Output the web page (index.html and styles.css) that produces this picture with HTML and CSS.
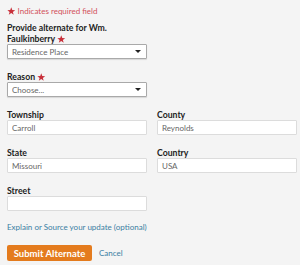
FILE: index.html
```html
<!DOCTYPE html>
<html lang="en">
<head>
  <meta charset="UTF-8" />
  <title>Submit Alternate</title>
  <link rel="stylesheet" href="styles.css">
</head>
<body>
  <form class="alt-form">
    <p class="required-note"><svg class="star" viewBox="0 0 10 10"><path d="M5 0.4 6.2 3.6 9.6 3.7 6.9 5.8 7.9 9.2 5 7.2 2.1 9.2 3.1 5.8 0.4 3.7 3.8 3.6Z"/></svg> Indicates required field</p>

    <div class="field">
      <label for="residence">Provide alternate for Wm. Faulkinberry <svg class="star" viewBox="0 0 10 10"><path d="M5 0.4 6.2 3.6 9.6 3.7 6.9 5.8 7.9 9.2 5 7.2 2.1 9.2 3.1 5.8 0.4 3.7 3.8 3.6Z"/></svg></label>
      <div class="select-wrap">
        <select id="residence">
          <option>Residence Place</option>
        </select>
        <span class="caret"></span>
      </div>
    </div>

    <div class="field">
      <label for="reason">Reason <svg class="star" viewBox="0 0 10 10"><path d="M5 0.4 6.2 3.6 9.6 3.7 6.9 5.8 7.9 9.2 5 7.2 2.1 9.2 3.1 5.8 0.4 3.7 3.8 3.6Z"/></svg></label>
      <div class="select-wrap">
        <select id="reason">
          <option>Choose...</option>
        </select>
        <span class="caret"></span>
      </div>
    </div>

    <div class="row">
      <div class="field">
        <label for="township">Township</label>
        <input type="text" id="township" value="Carroll" />
      </div>
      <div class="field">
        <label for="county">County</label>
        <input type="text" id="county" value="Reynolds" />
      </div>
    </div>

    <div class="row">
      <div class="field">
        <label for="state">State</label>
        <input type="text" id="state" value="Missouri" />
      </div>
      <div class="field">
        <label for="country">Country</label>
        <input type="text" id="country" value="USA" />
      </div>
    </div>

    <div class="field">
      <label for="street">Street</label>
      <input type="text" id="street" />
    </div>

    <a class="explain-link" href="#">Explain or Source your update (optional)</a>

    <div class="actions">
      <button type="submit" class="submit-btn">Submit Alternate</button>
      <a class="cancel-link" href="#">Cancel</a>
    </div>
  </form>
</body>
</html>
```

FILE: styles.css
```css
* { box-sizing: border-box; }

body {
  margin: 0;
  background: #f4f4f4;
  font-family: 'Lato', 'Open Sans', sans-serif;
  font-size: 8px;
  color: #333;
}

.alt-form {
  padding: 6px 2px 0 7px;
  width: 300px;
}

.required-note {
  margin: 0 0 5px;
  line-height: 11px;
  color: #d2505a;
}

.star {
  width: 8.5px;
  height: 8.5px;
  fill: #c8303a;
  vertical-align: -1px;
}

.field {
  width: 140px;
  margin-bottom: 12px;
}

label {
  display: block;
  font-size: 8.7px;
  font-weight: 700;
  line-height: 11px;
  color: #222;
}

input, select {
  display: block;
  width: 100%;
  height: 15px;
  margin: 0;
  padding: 0 4px;
  font-family: inherit;
  font-size: 8px;
  color: #666;
  background: #fff;
  border: 1px solid #dcdcdc;
  border-radius: 1px;
  outline: none;
}

.select-wrap {
  position: relative;
}

.select-wrap select {
  appearance: none;
  -webkit-appearance: none;
  border-color: #a9a9a9;
  box-shadow: 0 1px 1px rgba(0,0,0,0.12);
}

.caret {
  position: absolute;
  right: 6px;
  top: 6px;
  border-left: 3px solid transparent;
  border-right: 3px solid transparent;
  border-top: 3px solid #222;
}

.row {
  display: grid;
  grid-template-columns: 140px 141px;
  column-gap: 10px;
}

.explain-link {
  display: block;
  margin-top: -1px;
  line-height: 11px;
  color: #3b7ea3;
  text-decoration: none;
}

.actions {
  display: flex;
  align-items: center;
  gap: 7px;
  margin-top: 12px;
}

.submit-btn {
  width: 85px;
  height: 16px;
  padding: 0;
  background: #e47b1d;
  color: #fff;
  border: none;
  border-radius: 2px;
  font-family: inherit;
  font-size: 9.5px;
  font-weight: 700;
}

.cancel-link {
  color: #3b7ea3;
  text-decoration: none;
}
```
